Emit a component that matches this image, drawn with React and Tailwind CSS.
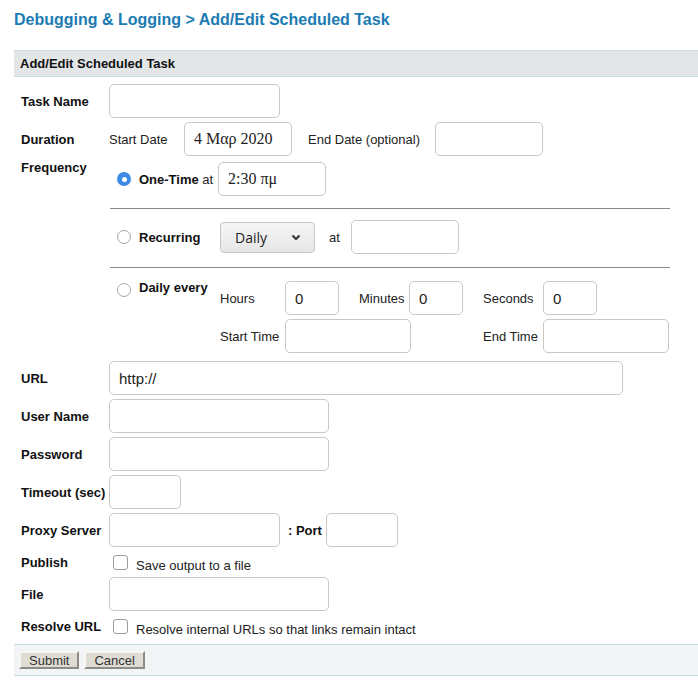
import { useState } from "react"

const font = "font-['Liberation_Sans',Arial,sans-serif]"

function TextInput({ width, value = "", serif = false }) {
  return (
    <input
      type="text"
      defaultValue={value}
      className={`h-[34px] ${width} shrink-0 rounded-[5px] border border-[#cbc8c4] bg-white px-[9px] text-[#222] outline-none ${
        serif
          ? "font-['Liberation_Serif','Times_New_Roman',serif] text-[16px]"
          : "font-['Liberation_Sans',Arial,sans-serif] text-[15px]"
      }`}
    />
  )
}

function Radio({ checked }) {
  if (checked) {
    return (
      <span className="flex h-[14px] w-[14px] shrink-0 items-center justify-center rounded-full bg-[#3f8ae6]">
        <span className="block h-[5px] w-[5px] rounded-full bg-white" />
      </span>
    )
  }
  return (
    <span className="block h-[14px] w-[14px] shrink-0 rounded-full border border-[#a8a8a8] bg-white" />
  )
}

function Checkbox() {
  return (
    <span className="block h-[15px] w-[15px] shrink-0 rounded-[3px] border border-[#9c9c9c] bg-white" />
  )
}

function Row({ label, children, className = "items-center" }) {
  return (
    <div className={`flex ${className}`}>
      <div className="w-[95px] shrink-0 pl-[7px] font-bold text-[#111]">{label}</div>
      {children}
    </div>
  )
}

function Button({ children }) {
  return (
    <button className="h-[18px] border-2 border-t-[#f7f6f2] border-l-[#f7f6f2] border-b-[#8d8b85] border-r-[#8d8b85] bg-[#dfdcd3] px-[8px] text-[13px] leading-[13px] text-[#333]">
      {children}
    </button>
  )
}

export default function App() {
  const [mode] = useState("once")

  return (
    <div className={`min-h-screen bg-white text-[13px] leading-[15px] text-[#222] ${font}`}>
      <h1 className="ml-[14px] pt-[10px] text-[16px] font-bold leading-[19px] text-[#1c7bb3]">
        Debugging &amp; Logging &gt; Add/Edit Scheduled Task
      </h1>

      <div className="ml-[14px] mt-[21px]">
        <div className="flex h-[27px] items-center border-y border-[#c3dde1] bg-[#e2e6e6] px-[6px] font-bold text-[#111]">
          Add/Edit Scheduled Task
        </div>

        <div className="flex flex-col gap-[4px] pb-[7px] pt-[7px]">
          <Row label="Task Name">
            <TextInput width="w-[171px]" />
          </Row>

          <Row label="Duration">
            <span className="w-[75px] shrink-0 pt-[1px]">Start Date</span>
            <TextInput width="w-[108px]" value="4 Μαρ 2020" serif />
            <span className="ml-[16px] w-[127px] shrink-0 pt-[1px]">End Date (optional)</span>
            <TextInput width="w-[108px]" />
          </Row>

          <Row label="Frequency" className="items-start">
            <div className="mb-[4px] w-[561px]">
              <div className="mt-[2px] flex h-[34px] items-center">
                <span className="ml-[8px]">
                  <Radio checked={mode === "once"} />
                </span>
                <span className="ml-[8px] w-[79px] shrink-0">
                  <b className="text-[#111]">One-Time</b> at
                </span>
                <TextInput width="w-[108px]" value="2:30 πμ" serif />
              </div>

              <div className="ml-[1px] mt-[12px] border-t border-[#8a8a8a]" />

              <div className="mt-[11px] flex h-[34px] items-center">
                <span className="ml-[8px]">
                  <Radio />
                </span>
                <span className="ml-[8px] w-[81px] shrink-0 font-bold text-[#111]">Recurring</span>
                <div className="flex h-[31px] w-[95px] shrink-0 items-center justify-between rounded-[4px] border border-[#c6c6c6] bg-gradient-to-b from-[#f6f6f6] to-[#e6e6e6] pl-[14px] pr-[13px] font-['Open_Sans',sans-serif] text-[14px] text-[#222]">
                  Daily
                  <svg width="10" height="7" viewBox="0 0 10 7" fill="none">
                    <path d="M1.5 1.5 5 5 8.5 1.5" stroke="#333" strokeWidth="2" />
                  </svg>
                </div>
                <span className="ml-[14px] w-[22px] shrink-0">at</span>
                <TextInput width="w-[108px]" />
              </div>

              <div className="ml-[1px] mt-[13px] border-t border-[#8a8a8a]" />

              <div className="mt-[12px] flex items-start">
                <span className="ml-[8px] mt-[3px]">
                  <Radio />
                </span>
                <span className="ml-[8px] w-[81px] shrink-0 font-bold text-[#111]">Daily every</span>
                <div className="mt-[1px] grid grid-cols-[65px_74px_50px_74px_60px_126px] items-center gap-y-[4px]">
                  <span>Hours</span>
                  <TextInput width="w-[54px]" value="0" />
                  <span>Minutes</span>
                  <TextInput width="w-[54px]" value="0" />
                  <span>Seconds</span>
                  <TextInput width="w-[54px]" value="0" />

                  <span>Start Time</span>
                  <div className="col-span-2">
                    <TextInput width="w-[126px]" />
                  </div>
                  <span />
                  <span>End Time</span>
                  <TextInput width="w-[126px]" />
                </div>
              </div>
            </div>
          </Row>

          <Row label="URL">
            <TextInput width="w-[514px]" value="http://" />
          </Row>

          <Row label="User Name">
            <TextInput width="w-[220px]" />
          </Row>

          <Row label="Password">
            <TextInput width="w-[220px]" />
          </Row>

          <Row label="Timeout (sec)">
            <TextInput width="w-[72px]" />
          </Row>

          <Row label="Proxy Server">
            <TextInput width="w-[171px]" />
            <span className="ml-[8px] w-[38px] shrink-0 font-bold text-[#111]">: Port</span>
            <TextInput width="w-[72px]" />
          </Row>

          <Row label="Publish" className="h-[22px] items-center">
            <span className="ml-[4px]">
              <Checkbox />
            </span>
            <span className="ml-[8px] pt-[6px]">Save output to a file</span>
          </Row>

          <Row label="File">
            <TextInput width="w-[220px]" />
          </Row>

          <Row label="Resolve URL" className="h-[22px] items-center">
            <span className="ml-[4px]">
              <Checkbox />
            </span>
            <span className="ml-[8px] pt-[6px]">Resolve internal URLs so that links remain intact</span>
          </Row>
        </div>

        <div className="flex h-[32px] items-center gap-[5px] border-y border-[#c3dde1] bg-[#f2f5f5] pl-[5px]">
          <Button>Submit</Button>
          <Button>Cancel</Button>
        </div>
      </div>
    </div>
  )
}
